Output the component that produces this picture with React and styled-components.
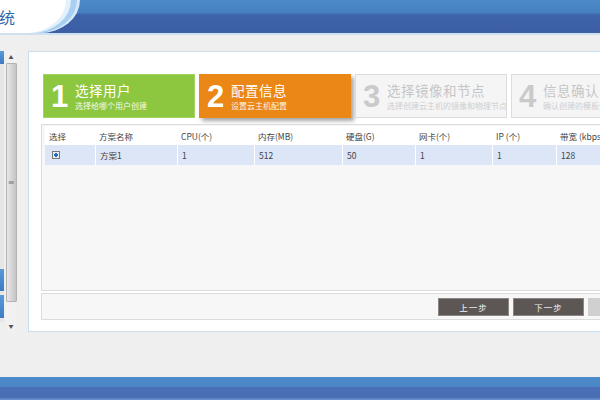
import React from "react";
import styled, { createGlobalStyle } from "styled-components";

const GlobalStyle = createGlobalStyle`
  html, body {
    margin: 0;
    padding: 0;
    overflow: hidden;
    background: #efefef;
    font-family: "Noto Sans CJK SC", "Liberation Sans", sans-serif;
  }
`;

const steps = [
  { n: "1", title: "选择用户", sub: "选择给哪个用户创建", state: "done" },
  { n: "2", title: "配置信息", sub: "设置云主机配置", state: "active" },
  { n: "3", title: "选择镜像和节点", sub: "选择创建云主机的镜像和物理节点", state: "todo" },
  { n: "4", title: "信息确认", sub: "确认创建的模板信息", state: "todo" },
];

const columns = [
  { label: "选择", w: 50 },
  { label: "方案名称", w: 82 },
  { label: "CPU(个)", w: 77 },
  { label: "内存(MB)", w: 88 },
  { label: "硬盘(G)", w: 73 },
  { label: "网卡(个)", w: 77 },
  { label: "IP (个)", w: 64 },
  { label: "带宽 (kbps)", w: 80 },
];

const row = ["", "方案1", "1", "512", "50", "1", "1", "128"];

const stepColors = {
  done: { bg: "#8dc63f", border: "#a4d262", fg: "#fff", sub: "#f2f9e8" },
  active: { bg: "#ea8716", border: "#ea8716", fg: "#fff", sub: "#fdf0e0" },
  todo: { bg: "#f5f5f5", border: "#dcdcdc", fg: "#c6c6c6", sub: "#cfcfcf" },
};

const App = () => {
  const grid = columns.map((c) => c.w + "px").join(" ");
  return (
    <Page>
      <GlobalStyle />
      <Header>
        <Logo>
          <LogoText>统</LogoText>
        </Logo>
      </Header>
      <Body>
        <Sidebar>
          <SideItem $h={13} />
          <SideGap />
          <SideItem $h={22} />
          <SideItem $h={23} />
        </Sidebar>
        <Scrollbar>
          <Arrow>▲</Arrow>
          <Thumb>
            <Grip>≡</Grip>
          </Thumb>
          <Arrow>▼</Arrow>
        </Scrollbar>
        <Panel>
          <Steps>
            {steps.map((s) => (
              <Step key={s.n} $state={s.state}>
                <StepNum $state={s.state}>{s.n}</StepNum>
                <StepText>
                  <StepTitle $state={s.state}>{s.title}</StepTitle>
                  <StepSub $state={s.state}>{s.sub}</StepSub>
                </StepText>
              </Step>
            ))}
          </Steps>
          <TableBox>
            <Row $cols={grid}>
              {columns.map((c) => (
                <HeadCell key={c.label}>{c.label}</HeadCell>
              ))}
            </Row>
            <Row $cols={grid} $selected>
              {row.map((v, i) => (
                <Cell key={i}>{i === 0 ? <Radio /> : v}</Cell>
              ))}
            </Row>
          </TableBox>
          <Toolbar>
            <Button>上一步</Button>
            <Button>下一步</Button>
            <Button $muted>完成</Button>
          </Toolbar>
        </Panel>
      </Body>
      <Footer />
    </Page>
  );
};

const Page = styled.div`
  width: 600px;
  height: 400px;
  display: flex;
  flex-direction: column;
  overflow: hidden;
`;

const Header = styled.div`
  height: 33px;
  flex-shrink: 0;
  display: flex;
  background: linear-gradient(#4c8ac8 0%, #4680c0 38%, #3e63a8 45%, #3c5ea5 100%);
  border-bottom: 2px solid #cfe0f0;
`;

const Logo = styled.div`
  width: 66px;
  height: 33px;
  background: #fff;
  border-radius: 0 0 40px 0 / 0 0 33px 0;
  box-shadow: 5px 0 0 #e4f0fb, 11px 0 0 #a8d0f2, 14px 0 0 #d8eafa;
  display: flex;
  align-items: center;
`;

const LogoText = styled.span`
  margin-left: -1px;
  font-size: 16px;
  color: #2e68ac;
`;

const Body = styled.div`
  flex: 1;
  display: flex;
  align-items: flex-start;
  padding-top: 16px;
`;

const Sidebar = styled.div`
  width: 4px;
  height: 271px;
  flex-shrink: 0;
  display: flex;
  flex-direction: column;
  background: #e6e6e6;
`;

const SideItem = styled.div`
  height: ${(p) => p.$h}px;
  margin-bottom: 4px;
  background: linear-gradient(#5a9ad8, #3b7cc4);
`;

const SideGap = styled.div`
  height: 203px;
`;

const Scrollbar = styled.div`
  width: 10px;
  height: 281px;
  flex-shrink: 0;
  margin-left: 2px;
  display: flex;
  flex-direction: column;
  align-items: center;
  background: #f1f1f1;
`;

const Arrow = styled.div`
  height: 12px;
  font-size: 5px;
  line-height: 12px;
  color: #555;
`;

const Thumb = styled.div`
  width: 9px;
  height: 238px;
  margin-bottom: 18px;
  border: 1px solid #b4b4b4;
  border-radius: 1px;
  background: linear-gradient(90deg, #e8e8e8, #d2d2d2 60%, #c4c4c4);
  display: flex;
  align-items: center;
  justify-content: center;
`;

const Grip = styled.span`
  font-size: 8px;
  color: #777;
  font-family: "DejaVu Sans", sans-serif;
`;

const Panel = styled.div`
  width: 640px;
  height: 281px;
  flex-shrink: 0;
  margin-left: 12px;
  background: #fff;
  border: 1px solid #c9dff0;
  padding: 22px 0 0 12px;
  box-sizing: border-box;
  display: flex;
  flex-direction: column;
`;

const Steps = styled.div`
  display: flex;
  gap: 4px;
  padding-left: 2px;
  margin-bottom: 6px;
`;

const Step = styled.div`
  width: 152px;
  height: 44px;
  box-sizing: border-box;
  flex-shrink: 0;
  display: flex;
  align-items: center;
  background: ${(p) => stepColors[p.$state].bg};
  border: 1px solid ${(p) => stepColors[p.$state].border};
  box-shadow: ${(p) => (p.$state === "active" ? "3px 3px 4px rgba(0,0,0,0.35)" : "none")};
`;

const StepNum = styled.div`
  width: 24px;
  flex-shrink: 0;
  padding-left: 7px;
  font-family: "Liberation Sans", Arial, sans-serif;
  font-weight: bold;
  font-size: 31px;
  line-height: 1;
  color: ${(p) => (p.$state === "todo" ? "#cacaca" : "#fff")};
`;

const StepText = styled.div`
  display: flex;
  flex-direction: column;
  gap: 3px;
  white-space: nowrap;
`;

const StepTitle = styled.div`
  font-size: 13.5px;
  line-height: 16px;
  letter-spacing: 0.5px;
  color: ${(p) => stepColors[p.$state].fg};
`;

const StepSub = styled.div`
  font-size: 8px;
  line-height: 10px;
  color: ${(p) => stepColors[p.$state].sub};
`;

const TableBox = styled.div`
  height: 167px;
  box-sizing: border-box;
  background: #f7f7f7;
  border: 1px solid #dcdcdc;
  padding: 1px 0 0 3px;
`;

const Row = styled.div`
  display: grid;
  grid-template-columns: ${(p) => p.$cols};
  height: ${(p) => (p.$selected ? 20 : 19)}px;
  background: ${(p) => (p.$selected ? "#dde6f6" : "#fff")};
  font-size: 8.5px;
  color: #444;
  align-items: center;
`;

const HeadCell = styled.div`
  padding-left: 4px;
  white-space: nowrap;
`;

const Cell = styled.div`
  height: 100%;
  display: flex;
  align-items: center;
  padding-left: 4px;
  border-left: 1px solid #fff;
  white-space: nowrap;
  &:first-child {
    border-left: none;
    padding-left: 7px;
  }
`;

const Radio = styled.span`
  width: 6px;
  height: 6px;
  border: 1px solid #777;
  background: radial-gradient(circle, #2a6fbc 0 1.6px, #e6ecf3 2px);
`;

const Toolbar = styled.div`
  height: 27px;
  box-sizing: border-box;
  margin-top: 2px;
  background: #f7f7f7;
  border: 1px solid #dcdcdc;
  display: flex;
  align-items: center;
  gap: 4px;
  padding-left: 396px;
`;

const Button = styled.div`
  width: 71px;
  height: 18px;
  flex-shrink: 0;
  box-sizing: border-box;
  display: flex;
  align-items: center;
  justify-content: center;
  background: ${(p) => (p.$muted ? "#d0d0d0" : "#5c5654")};
  border: 1px solid ${(p) => (p.$muted ? "#d0d0d0" : "#8a8684")};
  color: #f4f4f4;
  font-size: 8.5px;
  letter-spacing: 1px;
`;

const Footer = styled.div`
  height: 23px;
  flex-shrink: 0;
  background: linear-gradient(#4b8bca 0%, #4a86c6 42%, #4a6fb6 45%, #4a6db4 88%, #6d95cf 100%);
`;

export default App;
